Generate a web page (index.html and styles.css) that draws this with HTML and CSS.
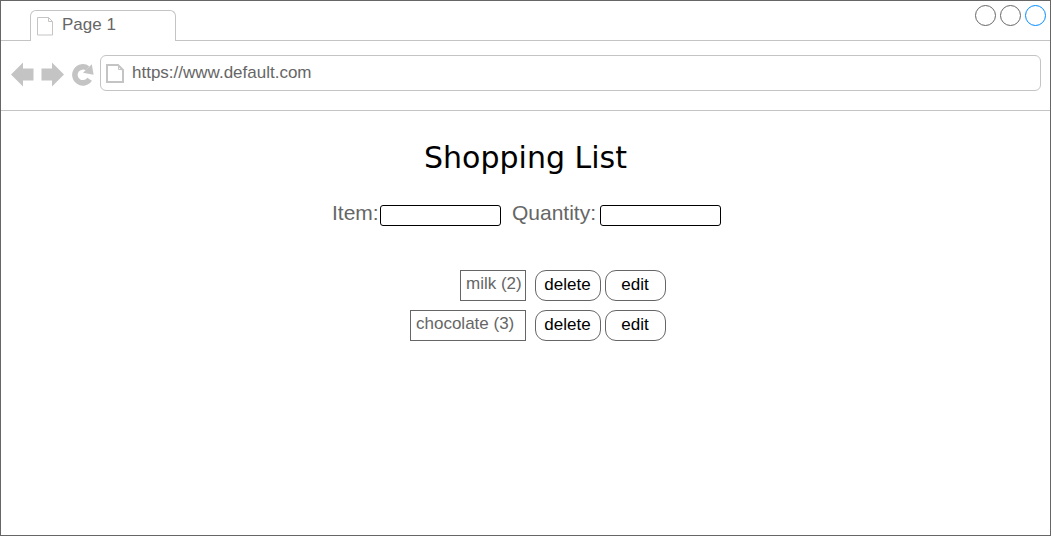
FILE: index.html
```html
<!DOCTYPE html>
<html lang="en">
<head>
<meta charset="utf-8">
<title>Shopping List</title>
<link rel="stylesheet" href="styles.css">
</head>
<body>
<div class="window">
  <header class="tabs">
    <div class="tab-lead"></div>
    <div class="tab">
      <svg class="tab-icon" width="18" height="21" viewBox="0 0 18 21"><path d="M1.500 2.500h11l4 4v13.500h-15zM12.500 2.500v4h4"/></svg>
      <span>Page 1</span>
    </div>
    <div class="tab-rest">
      <svg width="73" height="23" viewBox="0 0 73 23"><circle cx="11.5" cy="11.5" r="10"/><circle cx="36.5" cy="11.5" r="10"/><circle class="active" cx="61.5" cy="11.5" r="10"/></svg>
    </div>
  </header>
  <nav class="toolbar">
    <svg class="nav-icons" width="86" height="28" viewBox="0 0 86 28">
      <path d="M1 14.500 13 2.500v6h10.500v12H13v6z"/>
      <path d="M54 14.500 42 2.500v6H31.500v12H42v6z"/>
      <path class="reload" d="M79.600 19.200A8 8 0 1 1 77.600 8.400"/>
      <path d="M81.800 4.200 83.600 14.700 73 12.700z"/>
    </svg>
    <div class="address">
      <svg class="page-icon" width="20" height="22" viewBox="0 0 20 22"><path d="M1 2h11l5 5v12H1z"/><path class="fold" d="M12.500 2v4.500h4.500"/></svg>
      <span>https://www.default.com</span>
    </div>
  </nav>
  <main class="content">
    <h1 class="title">Shopping List</h1>
    <form class="entry">
      <label class="field" for="item">Item:</label>
      <input class="box" id="item" type="text">
      <label class="field quantity" for="quantity">Quantity:</label>
      <input class="box" id="quantity" type="text">
    </form>
    <ul class="list">
      <li class="row"><span class="entry-name milk">milk (2)</span><button class="btn delete">delete</button><button class="btn edit">edit</button></li>
      <li class="row"><span class="entry-name chocolate">chocolate (3)</span><button class="btn delete">delete</button><button class="btn edit">edit</button></li>
    </ul>
  </main>
</div>
</body>
</html>
```
FILE: styles.css
```css
* { box-sizing: border-box; }
body { margin: 0; background: #fff; color: #666; font: 17px/20px "Liberation Sans", Arial, sans-serif; }
svg { display: block; flex: none; }
.window { display: flex; flex-direction: column; width: 1051px; height: 536px; border: 1px solid #666; }
.tabs { display: flex; flex: none; height: 40px; }
.tab-lead { width: 29px; border-bottom: 1px solid #c4c4c4; }
.tab { display: flex; width: 146px; height: 31px; margin-top: 9px; padding: 4px 0 0 5px; border: 1px solid #c4c4c4; border-bottom: 0; border-radius: 6px 6px 0 0; gap: 8px; }
.tab-icon path { fill: none; stroke: #c4c4c4; }
.tab-rest { display: flex; flex: 1; justify-content: flex-end; padding: 3px 3px 0 0; border-bottom: 1px solid #c4c4c4; }
.tab-rest circle { fill: none; stroke: #666; }
.tab-rest .active { stroke: #008cff; }
.toolbar { display: flex; flex: none; height: 70px; padding: 14px 9px 0; border-bottom: 1px solid #c4c4c4; }
.nav-icons { margin: 5px 4px 0 0; fill: #c4c4c4; }
.nav-icons .reload { fill: none; stroke: #c4c4c4; stroke-width: 5.5; }
.address { display: flex; flex: 1; height: 36px; padding: 7px 5px; gap: 6px; border: 1px solid #c4c4c4; border-radius: 6px; }
.page-icon path { fill: none; stroke: #c4c4c4; stroke-width: 2; }
.page-icon .fold { stroke-width: 1; }
.content { display: flex; flex-direction: column; align-items: flex-start; }
.title { width: 100%; margin: 29px 0 0; color: #000; font: 30px/36px "DejaVu Sans", Verdana, sans-serif; text-align: center; }
.entry { display: flex; margin: 28px 0 0 331px; }
.field { width: 48px; height: 20px; margin-top: -1px; font-size: 21px; white-space: nowrap; }
.quantity { width: 88px; margin-left: 11px; }
.box { width: 121px; height: 21px; margin: 1px 0 0; padding: 0 3px; border: 1px solid #000; border-radius: 3px; background: #fff; }
.list { display: flex; flex-direction: column; align-items: flex-end; width: 665px; margin: 44px 0 0; padding: 0; gap: 9px; list-style: none; }
.row { display: flex; height: 31px; }
.entry-name { height: 31px; margin-right: 9px; padding: 3px 0 0 5px; border: 1px solid #666; white-space: nowrap; }
.milk { width: 66px; }
.chocolate { width: 116px; }
.btn { height: 31px; padding: 0 1px 2px 0; border: 1px solid #666; border-radius: 11px; background: #fff; color: #000; font: inherit; }
.delete { width: 66px; margin-right: 4px; }
.edit { width: 61px; }
```
